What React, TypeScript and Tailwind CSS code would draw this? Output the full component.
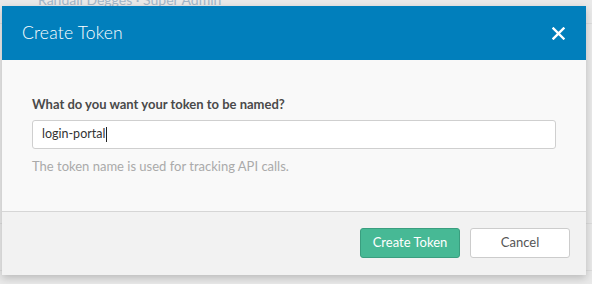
import React from "react";

export default function App() {
  const font = { fontFamily: "Lato, 'Open Sans', 'Liberation Sans', sans-serif" };
  return (
    <div className="relative w-[592px] h-[284px] overflow-hidden bg-[#e9e9e9]" style={font}>
      {/* background page */}
      <div className="absolute left-[38px] top-[-8px] text-[14px] leading-[16px] text-[#a3b6c8]">Randall Degges · Super Admin</div>
      <div className="absolute left-0 right-0 top-[23px] h-px bg-[#dcdcdc]" />
      <div className="absolute left-0 right-0 top-[223px] h-px bg-[#dcdcdc]" />
      <div className="absolute left-0 right-0 top-[270px] h-px bg-[#dcdcdc]" />

      {/* modal */}
      <div className="absolute left-[2px] top-[6px] w-[584px] flex flex-col shadow-[0_3px_8px_rgba(0,0,0,0.2)]">
        <div className="h-[54px] bg-[#017fbc] flex items-center justify-between pl-[20px] pr-[21px]">
          <span className="text-[17.5px] text-white font-light tracking-[0.2px]">Create Token</span>
          <svg width="13" height="13" viewBox="0 0 13 13" className="mt-[1px]">
            <path d="M1.5 1.5 L11.5 11.5 M11.5 1.5 L1.5 11.5" stroke="white" strokeWidth="2.4" strokeLinecap="square" />
          </svg>
        </div>
        <div className="h-[152px] bg-[#f9f9f9] border-b border-[#d6d6d6] pt-[36px] px-[30px]">
          <div className="text-[13px] font-bold text-[#4a4a4a] leading-[16px]">What do you want your token to be named?</div>
          <div className="mt-[8px] h-[29px] w-[524px] bg-white border border-[#cfcfcf] rounded-[3px] flex items-center pl-[9px] text-[12.5px] text-[#333]">
            login-portal<span className="inline-block w-px h-[15px] bg-[#222] ml-px" />
          </div>
          <div className="mt-[9px] text-[13px] text-[#aaa] leading-[16px]">The token name is used for tracking API calls.</div>
        </div>
        <div className="h-[63px] bg-[#f2f2f2] flex items-center justify-end gap-[10px] pr-[16px] pb-[1px]">
          <button className="w-[100px] h-[30px] rounded-[3px] bg-[#47b995] border border-[#3a9e7f] text-white text-[13px]">Create Token</button>
          <button className="w-[100px] h-[30px] rounded-[3px] bg-white border border-[#cccccc] text-[#555] text-[13px]">Cancel</button>
        </div>
      </div>
    </div>
  );
}
